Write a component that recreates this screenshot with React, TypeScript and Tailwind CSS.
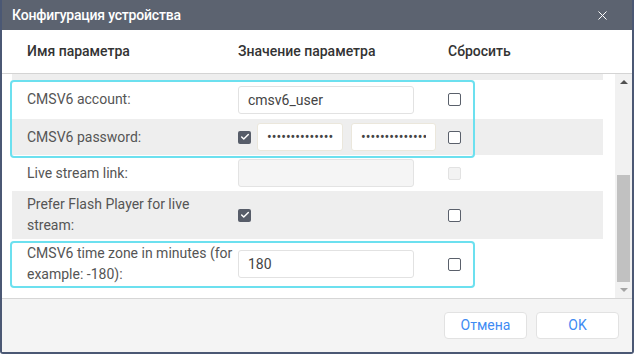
import { X, Check } from 'lucide-react';

const Box = ({ checked, disabled }: { checked?: boolean; disabled?: boolean }) => {
  if (checked)
    return (
      <span className="w-[13px] h-[13px] rounded-[2px] bg-[#575d69] flex items-center justify-center">
        <Check size={10} strokeWidth={3.5} className="text-white" />
      </span>
    );
  if (disabled) return <span className="w-[13px] h-[13px] rounded-[2px] border border-[#e2e2e2] bg-[#f3f3f3]" />;
  return <span className="w-[13px] h-[13px] rounded-[2px] border-[1.5px] border-[#5a606b] bg-white" />;
};

const Field = ({ value, disabled, type = 'text', w = 'w-[176px]' }: { value?: string; disabled?: boolean; type?: string; w?: string }) => (
  <input
    readOnly
    type={type}
    value={value ?? ''}
    className={`${w} h-[28px] rounded-[3px] border px-[9px] text-[14px] text-[#444] outline-none ${
      disabled ? 'bg-[#f5f5f5] border-[#e3e3e3]' : 'bg-white border-[#e2e2e2]'
    }`}
  />
);

const Row = ({ label, value, reset, gray, h }: { label: string; value: React.ReactNode; reset: React.ReactNode; gray?: boolean; h: string }) => (
  <div className={`grid grid-cols-[226px_210px_1fr] items-center ${h} ${gray ? 'bg-[#eeeeee]' : 'bg-white'}`}>
    <div className="pl-[15px] text-[14px] leading-[21px] text-[#555]">{label}</div>
    <div className="flex items-center">{value}</div>
    <div className="flex items-center">{reset}</div>
  </div>
);

export default function App() {
  return (
    <div className="w-[634px] h-[354px] bg-[#4b5874] px-[2px] pb-[2px] flex flex-col rounded-b-[3px] overflow-hidden" style={{ fontFamily: 'Roboto, "Noto Sans", sans-serif' }}>
      <div className="h-[30px] bg-[#5c6370] flex items-center justify-between pl-[10px] pr-[22px] text-white shrink-0">
        <span className="text-[14px] font-medium tracking-[-0.2px]">Конфигурация устройства</span>
        <X size={15} strokeWidth={1.6} />
      </div>

      <div className="flex-1 bg-white flex flex-col min-h-0">
        <div className="h-[44px] shrink-0 border-b border-[#d4d4d4] pl-[10px] grid grid-cols-[226px_210px_1fr] items-center text-[14px] font-medium text-[#333]">
          <span className="pl-[15px]">Имя параметра</span>
          <span>Значение параметра</span>
          <span>Сбросить</span>
        </div>

        <div className="relative h-[224px] shrink-0 flex">
          <div className="flex-1 pl-[10px] pr-[12px] overflow-hidden">
            <div className="h-[6px] bg-[#eeeeee]" />
            <Row h="h-[39px]" label="CMSV6 account:" value={<Field value="cmsv6_user" />} reset={<Box />} />
            <Row
              h="h-[36px]"
              gray
              label="CMSV6 password:"
              value={
                <div className="flex items-center">
                  <Box checked />
                  <Field type="password" value="cmsv6passwordsecret" w="w-[86px] ml-[6px] h-[27px] border-[#ebe7dc]" />
                  <Field type="password" value="cmsv6passwordsecret" w="w-[85px] ml-[8px] h-[27px] border-[#ebe7dc]" />
                </div>
              }
              reset={<Box />}
            />
            <Row h="h-[36px]" label="Live stream link:" value={<Field disabled />} reset={<Box disabled />} />
            <Row h="h-[48px]" gray label="Prefer Flash Player for live stream:" value={<Box checked />} reset={<Box />} />
            <Row h="h-[50px]" label="CMSV6 time zone in minutes (for example: -180):" value={<Field value="180" />} reset={<Box />} />
          </div>

          <div className="w-[17px] bg-[#f1f1f1] flex flex-col items-center">
            <div className="h-[17px] flex items-center justify-center">
              <span className="w-0 h-0 border-x-[4px] border-x-transparent border-b-[4px] border-b-[#505050]" />
            </div>
            <div className="flex-1 w-full px-[2px] flex flex-col">
              <div className="h-[84px]" />
              <div className="h-[107px] bg-[#c1c1c1]" />
            </div>
            <div className="h-[17px] flex items-center justify-center">
              <span className="w-0 h-0 border-x-[4px] border-x-transparent border-t-[4px] border-t-[#a3a3a3]" />
            </div>
          </div>

          <div className="absolute left-[8px] top-[6px] w-[465px] h-[78px] border-2 border-[#6ce0ef] rounded-[4px] pointer-events-none" />
          <div className="absolute left-[8px] top-[167px] w-[465px] h-[47px] border-2 border-[#6ce0ef] rounded-[4px] pointer-events-none" />
        </div>

        <div className="flex-1 border-t border-[#d6d6d6] bg-[#f4f4f4] flex items-center justify-end gap-[9px] pr-[13px]">
          <button className="w-[83px] h-[27px] rounded-[4px] border border-[#e2e2e2] bg-white text-[14px] text-[#3f8bf3]">Отмена</button>
          <button className="w-[83px] h-[27px] rounded-[4px] border border-[#e2e2e2] bg-white text-[14px] text-[#3f8bf3]">OK</button>
        </div>
      </div>
    </div>
  );
}
